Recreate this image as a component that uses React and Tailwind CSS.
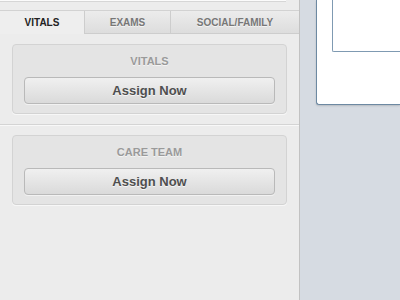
import React from 'react';

const Card = ({ title }) => (
  <div className="mx-[12px] rounded-[4px] border border-[#d3d3d3] bg-[#e4e4e4] px-[11px] pt-[9px] pb-[9px] shadow-[0_1px_0_#f7f7f7]">
    <div className="text-center text-[11px] font-bold leading-[14px] text-[#9a9a9a] [text-shadow:0_1px_0_#f4f4f4]">
      {title}
    </div>
    <button className="mt-[9px] flex h-[27px] w-full items-center justify-center rounded-[4px] border border-[#b9b9b9] bg-gradient-to-b from-[#f0f0f0] to-[#dadada] text-[13px] font-bold text-[#4f4f4f] shadow-[0_1px_0_#f2f2f2] [text-shadow:0_1px_0_#f6f6f6]">
      Assign Now
    </button>
  </div>
);

const App = () => {
  return (
    <div className="flex h-[300px] w-[400px] overflow-hidden font-['Liberation_Sans',Arial,sans-serif]">
      {/* Left panel */}
      <div className="flex w-[300px] flex-col border-r border-[#c2c2c2] bg-[#ececec]">
        <div className="h-[10px]">
          <div className="h-[2px] w-[286px] border-b border-[#d6d6d6] bg-[#fbfbfb]" />
        </div>

        {/* Tabs */}
        <div className="flex h-[24px] border-t border-[#d2d2d2] text-[10px] font-bold">
          <div className="flex w-[84px] items-center justify-center bg-[#eeeeee] text-[#222]">VITALS</div>
          <div className="flex w-[86px] items-center justify-center border-b border-l border-[#cdcdcd] bg-gradient-to-b from-[#ececec] to-[#dddddd] text-[#777] [text-shadow:0_1px_0_#f4f4f4]">
            EXAMS
          </div>
          <div className="flex flex-1 items-center justify-center border-b border-l border-[#cdcdcd] bg-gradient-to-b from-[#ececec] to-[#dddddd] text-[#777] [text-shadow:0_1px_0_#f4f4f4]">
            SOCIAL/FAMILY
          </div>
        </div>

        {/* Vitals */}
        <div className="border-b border-[#d4d4d4] pt-[10px] pb-[10px] shadow-[0_1px_0_#f8f8f8]">
          <Card title="VITALS" />
        </div>

        {/* Care team */}
        <div className="pt-[10px]">
          <Card title="CARE TEAM" />
        </div>
      </div>

      {/* Right area */}
      <div className="flex-1 bg-[#d6dbe2] pl-[16px]">
        <div className="h-[105px] rounded-bl-[3px] border-b border-l border-[#6d89a2] bg-white pl-[15px] shadow-[0_1px_2px_rgba(0,0,0,0.15)]">
          <div className="h-[52px] rounded-bl-[2px] border-b border-l border-[#7f9ab2] bg-white" />
        </div>
      </div>
    </div>
  );
};

export default App;
